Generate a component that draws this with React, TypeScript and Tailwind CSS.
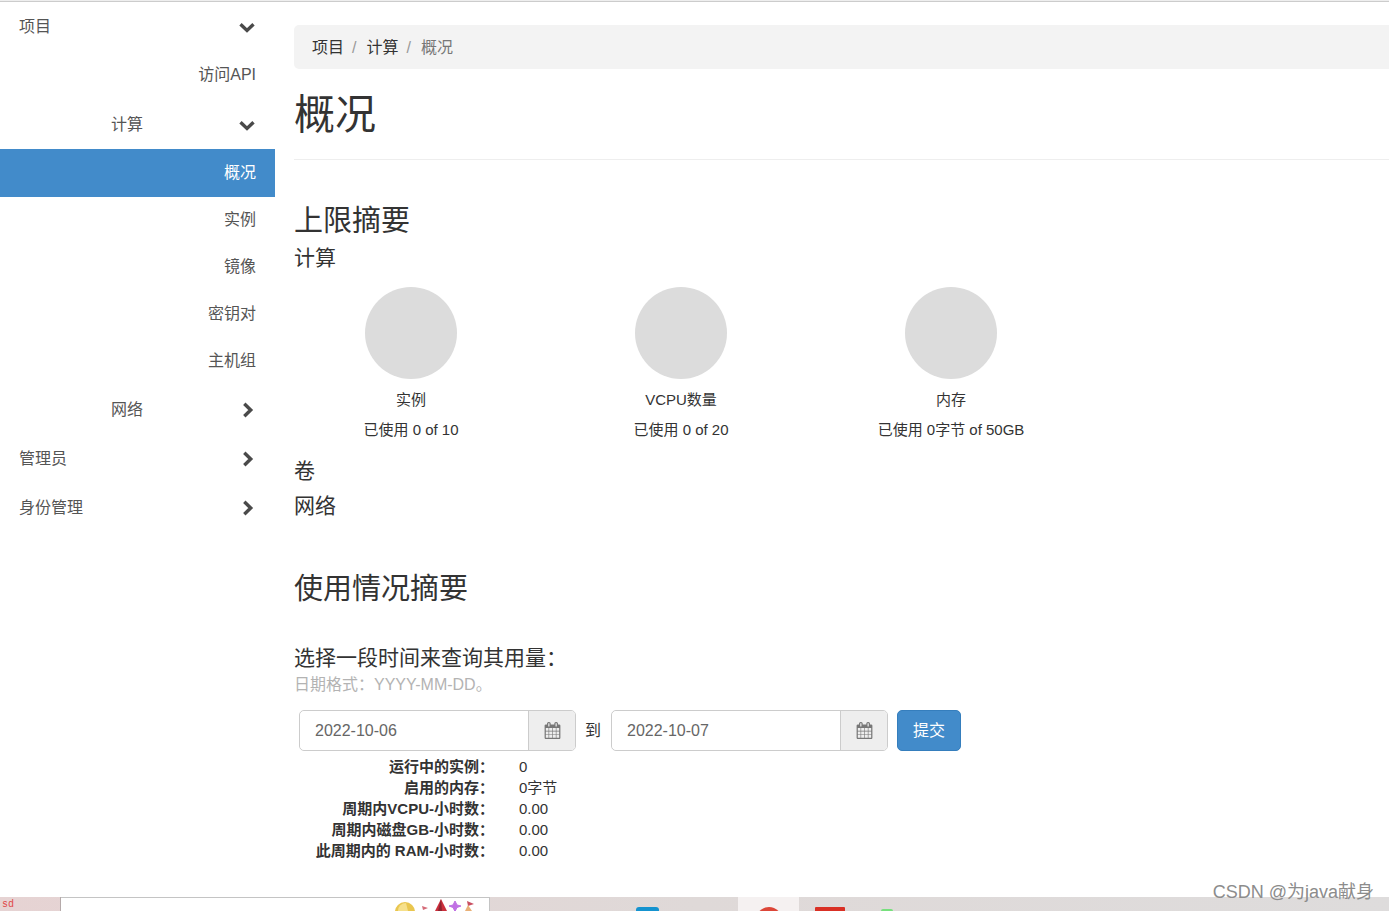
import { useState } from "react";
import clsx from "clsx";

type NavItem = {
  label: string;
  level: "root" | "group" | "leaf";
  open?: boolean;
  tall?: boolean;
};

const NAV: NavItem[] = [
  { label: "项目", level: "root", open: true },
  { label: "访问API", level: "leaf", tall: true },
  { label: "计算", level: "group", open: true },
  { label: "概况", level: "leaf" },
  { label: "实例", level: "leaf" },
  { label: "镜像", level: "leaf" },
  { label: "密钥对", level: "leaf" },
  { label: "主机组", level: "leaf" },
  { label: "网络", level: "group" },
  { label: "管理员", level: "root" },
  { label: "身份管理", level: "root" },
];

const QUOTAS = [
  { name: "实例", usage: "已使用 0 of 10" },
  { name: "VCPU数量", usage: "已使用 0 of 20" },
  { name: "内存", usage: "已使用 0字节 of 50GB" },
];

const USAGE = [
  { term: "运行中的实例：", value: "0" },
  { term: "启用的内存：", value: "0字节" },
  { term: "周期内VCPU-小时数：", value: "0.00" },
  { term: "周期内磁盘GB-小时数：", value: "0.00" },
  { term: "此周期内的 RAM-小时数：", value: "0.00" },
];

function Chevron({ open }: { open?: boolean }) {
  return (
    <svg width="16" height="16" viewBox="0 0 16 16" fill="none" stroke="#4a4a4a" strokeWidth="3.4">
      <path d={open ? "M1.5 5.2L8 11.4L14.5 5.2" : "M5.3 1.8L11.7 8L5.3 14.2"} />
    </svg>
  );
}

function CalendarIcon() {
  return (
    <svg width="17" height="17" viewBox="0 0 1792 1792" fill="#777">
      <path d="M192 1664h288v-288h-288v288zm352 0h320v-288h-320v288zm-352-352h288v-320h-288v320zm352 0h320v-320h-320v320zm-352-384h288v-288h-288v288zm736 736h320v-288h-320v288zm-384-736h320v-288h-320v288zm768 736h288v-288h-288v288zm-384-352h320v-320h-320v320zm-352-864v-288q0-13-9.5-22.5t-22.5-9.5h-64q-13 0-22.5 9.5t-9.5 22.5v288q0 13 9.5 22.5t22.5 9.5h64q13 0 22.5-9.5t9.5-22.5zm736 864h288v-320h-288v320zm-384-384h320v-288h-320v288zm384 0h288v-288h-288v288zm32-480v-288q0-13-9.5-22.5t-22.5-9.5h-64q-13 0-22.5 9.5t-9.5 22.5v288q0 13 9.5 22.5t22.5 9.5h64q13 0 22.5-9.5t9.5-22.5zm384-64v1280q0 52-38 90t-90 38h-1408q-52 0-90-38t-38-90v-1280q0-52 38-90t90-38h128v-96q0-66 47-113t113-47h64q66 0 113 47t47 113v96h384v-96q0-66 47-113t113-47h64q66 0 113 47t47 113v96h128q52 0 90 38t38 90z" />
    </svg>
  );
}

function Sidebar() {
  const [active, setActive] = useState("概况");

  return (
    <nav className="w-[275px] shrink-0 text-base text-[#555]">
      {NAV.map((item) => {
        if (item.level === "leaf") {
          const isActive = item.label === active;
          return (
            <a
              key={item.label}
              href="#"
              onClick={() => setActive(item.label)}
              className={clsx(
                "flex items-center justify-end pr-[19px]",
                isActive ? "h-12 bg-[#428bca] text-white" : item.tall ? "h-[49px] pb-px" : "h-[47px] pb-[2px]",
              )}
            >
              {item.label}
            </a>
          );
        }
        return (
          <button
            key={item.label}
            type="button"
            aria-expanded={!!item.open}
            className={clsx(
              "flex h-[49px] w-full items-center justify-between pr-5",
              item.level === "group" ? "pl-[111px]" : "pl-[19px]",
            )}
          >
            {item.label}
            <Chevron open={item.open} />
          </button>
        );
      })}
    </nav>
  );
}

function DateField({ id, label, initial }: { id: string; label: string; initial: string }) {
  const [value, setValue] = useState(initial);

  return (
    <div className="flex h-[41px] w-[277px] rounded-[5px] border border-[#ccc]">
      <input
        id={id}
        type="text"
        aria-label={label}
        value={value}
        onChange={(e) => setValue(e.target.value)}
        className="min-w-0 flex-1 rounded-l-[5px] bg-white px-[15px] text-base text-[#666] outline-none"
      />
      <label
        htmlFor={id}
        className="flex w-[47px] items-center justify-center rounded-r-[4px] border-l border-[#ccc] bg-[#eee]"
      >
        <CalendarIcon />
      </label>
    </div>
  );
}

function Overview() {
  return (
    <main className="min-w-0 flex-1 pt-[23px] text-[#333]">
      <div className="pl-[19px]">
        <ol className="flex h-11 items-center rounded-l-[5px] bg-[#f3f3f3] pt-[2px] pl-[18px] text-base">
          <li>
            <a href="#">项目</a>
            <span className="pr-[10px] pl-2 text-[#999]">/</span>
          </li>
          <li>
            <a href="#">计算</a>
            <span className="pr-[10px] pl-2 text-[#999]">/</span>
          </li>
          <li className="text-[#777]">概况</li>
        </ol>

        <h1 className="mt-[23px] border-b border-[#eee] pb-[21px] text-[41px] leading-[46px]">概况</h1>

        <h2 className="mt-[45px] text-[29px] leading-8">上限摘要</h2>
        <h3 className="mt-[9px] text-[21px] leading-6">计算</h3>
      </div>

      {/* Quota charts */}
      <div className="mt-[17px] flex flex-wrap pl-px text-[15px] leading-5">
        {QUOTAS.map((q) => (
          <div key={q.name} className="flex w-[270px] flex-col items-center">
            <div className="size-[92px] rounded-full bg-[#dcdcdc]" />
            <div className="mt-[11px]">{q.name}</div>
            <div className="mt-[10px]">{q.usage}</div>
          </div>
        ))}
      </div>

      <div className="pl-[19px]">
        <h3 className="mt-[19px] text-[21px] leading-6">卷</h3>
        <h3 className="mt-[11px] text-[21px] leading-6">网络</h3>

        <h2 className="mt-[55px] text-[29px] leading-8">使用情况摘要</h2>

        <form onSubmit={(e) => e.preventDefault()}>
          <h3 className="mt-[41px] text-[21px] leading-6">选择一段时间来查询其用量：</h3>
          <p className="mt-[3px] text-base leading-6 text-[#b3b3b3]">日期格式：YYYY-MM-DD。</p>
          <div className="mt-[13px] flex flex-wrap items-center gap-[9px] pl-[5px]">
            <DateField id="start" label="从" initial="2022-10-06" />
            <label htmlFor="end" className="pr-px text-base">
              到
            </label>
            <DateField id="end" label="到" initial="2022-10-07" />
            <button
              type="submit"
              className="h-[41px] rounded-[5px] border border-[#357ebd] bg-[#428bca] px-[15px] text-base text-white"
            >
              提交
            </button>
          </div>
        </form>

        {/* Usage totals */}
        <dl className="mt-[5px] grid grid-cols-[200px_1fr] gap-x-[25px] text-[15px] leading-[21px]">
          {USAGE.map((row) => (
            <div key={row.term} className="contents">
              <dt className="text-right font-bold">{row.term}</dt>
              <dd>{row.value}</dd>
            </div>
          ))}
        </dl>
      </div>
    </main>
  );
}

function Taskbar() {
  return (
    <footer className="flex h-[14px] shrink-0 overflow-hidden bg-linear-to-r from-[#e6d3d3] via-[#dfd9d8] to-[#dedcdc]">
      <div className="w-[61px] border-r border-[#b5aaaa] pl-[2px] font-['Liberation_Mono',monospace] text-[10px] leading-4 text-[#e04848]">
        sd
      </div>
      <div className="flex w-[429px] justify-end border-t border-r border-[#c4c4c4] bg-white pr-3">
        <svg width="82" height="13" viewBox="0 0 82 13">
          <circle cx="10" cy="14" r="10" fill="#e9c64f" />
          <path d="M3 13a8 8 0 0 1 8-8l2 8z" fill="#f6e08b" />
          <path d="M27 8l6 2-5 2z" fill="#d56b78" />
          <path d="M46 1l6 12H40z" fill="#cb2f3c" />
          <path d="M46 1l1 12h-4z" fill="#8d2430" />
          <path d="M60 3l2 4 4 1-4 1.500-2 4-2-4-4-1.500 4-1z" fill="#c071e4" stroke="#c071e4" />
          <path d="M72 3l7 3-6 2z" fill="#c94f61" />
          <path d="M73 7l4 6h-7z" fill="#e9b077" />
        </svg>
      </div>
      <div className="flex w-[248px] items-end pl-[146px]">
        <div className="h-1 w-[23px] rounded-t-[3px] bg-[#1593cf]" />
      </div>
      <div className="flex w-[61px] items-end justify-center bg-[#f5f1f1]">
        <svg width="24" height="4" viewBox="0 0 24 4">
          <circle cx="12" cy="13" r="13" fill="#dc4638" />
        </svg>
      </div>
      <div className="flex items-end gap-9 pl-4">
        <div className="h-1 w-[30px] rounded-t-[1px] bg-[#d93025]" />
        <div className="h-[2px] w-3 rounded-t-full bg-[#77e07d]" />
      </div>
    </footer>
  );
}

export default function App() {
  return (
    <div className="relative flex min-h-screen flex-col bg-white font-['Liberation_Sans','Noto_Sans_CJK_SC',sans-serif]">
      <div className="h-[2px] shrink-0 border-b border-[#ccc] bg-[#eee]" />
      <div className="flex flex-1">
        <Sidebar />
        <Overview />
      </div>
      <Taskbar />
      <div className="absolute right-[15px] bottom-[7px] text-lg leading-6 text-[#8c8c8c]">
        CSDN @为java献身
      </div>
    </div>
  );
}
